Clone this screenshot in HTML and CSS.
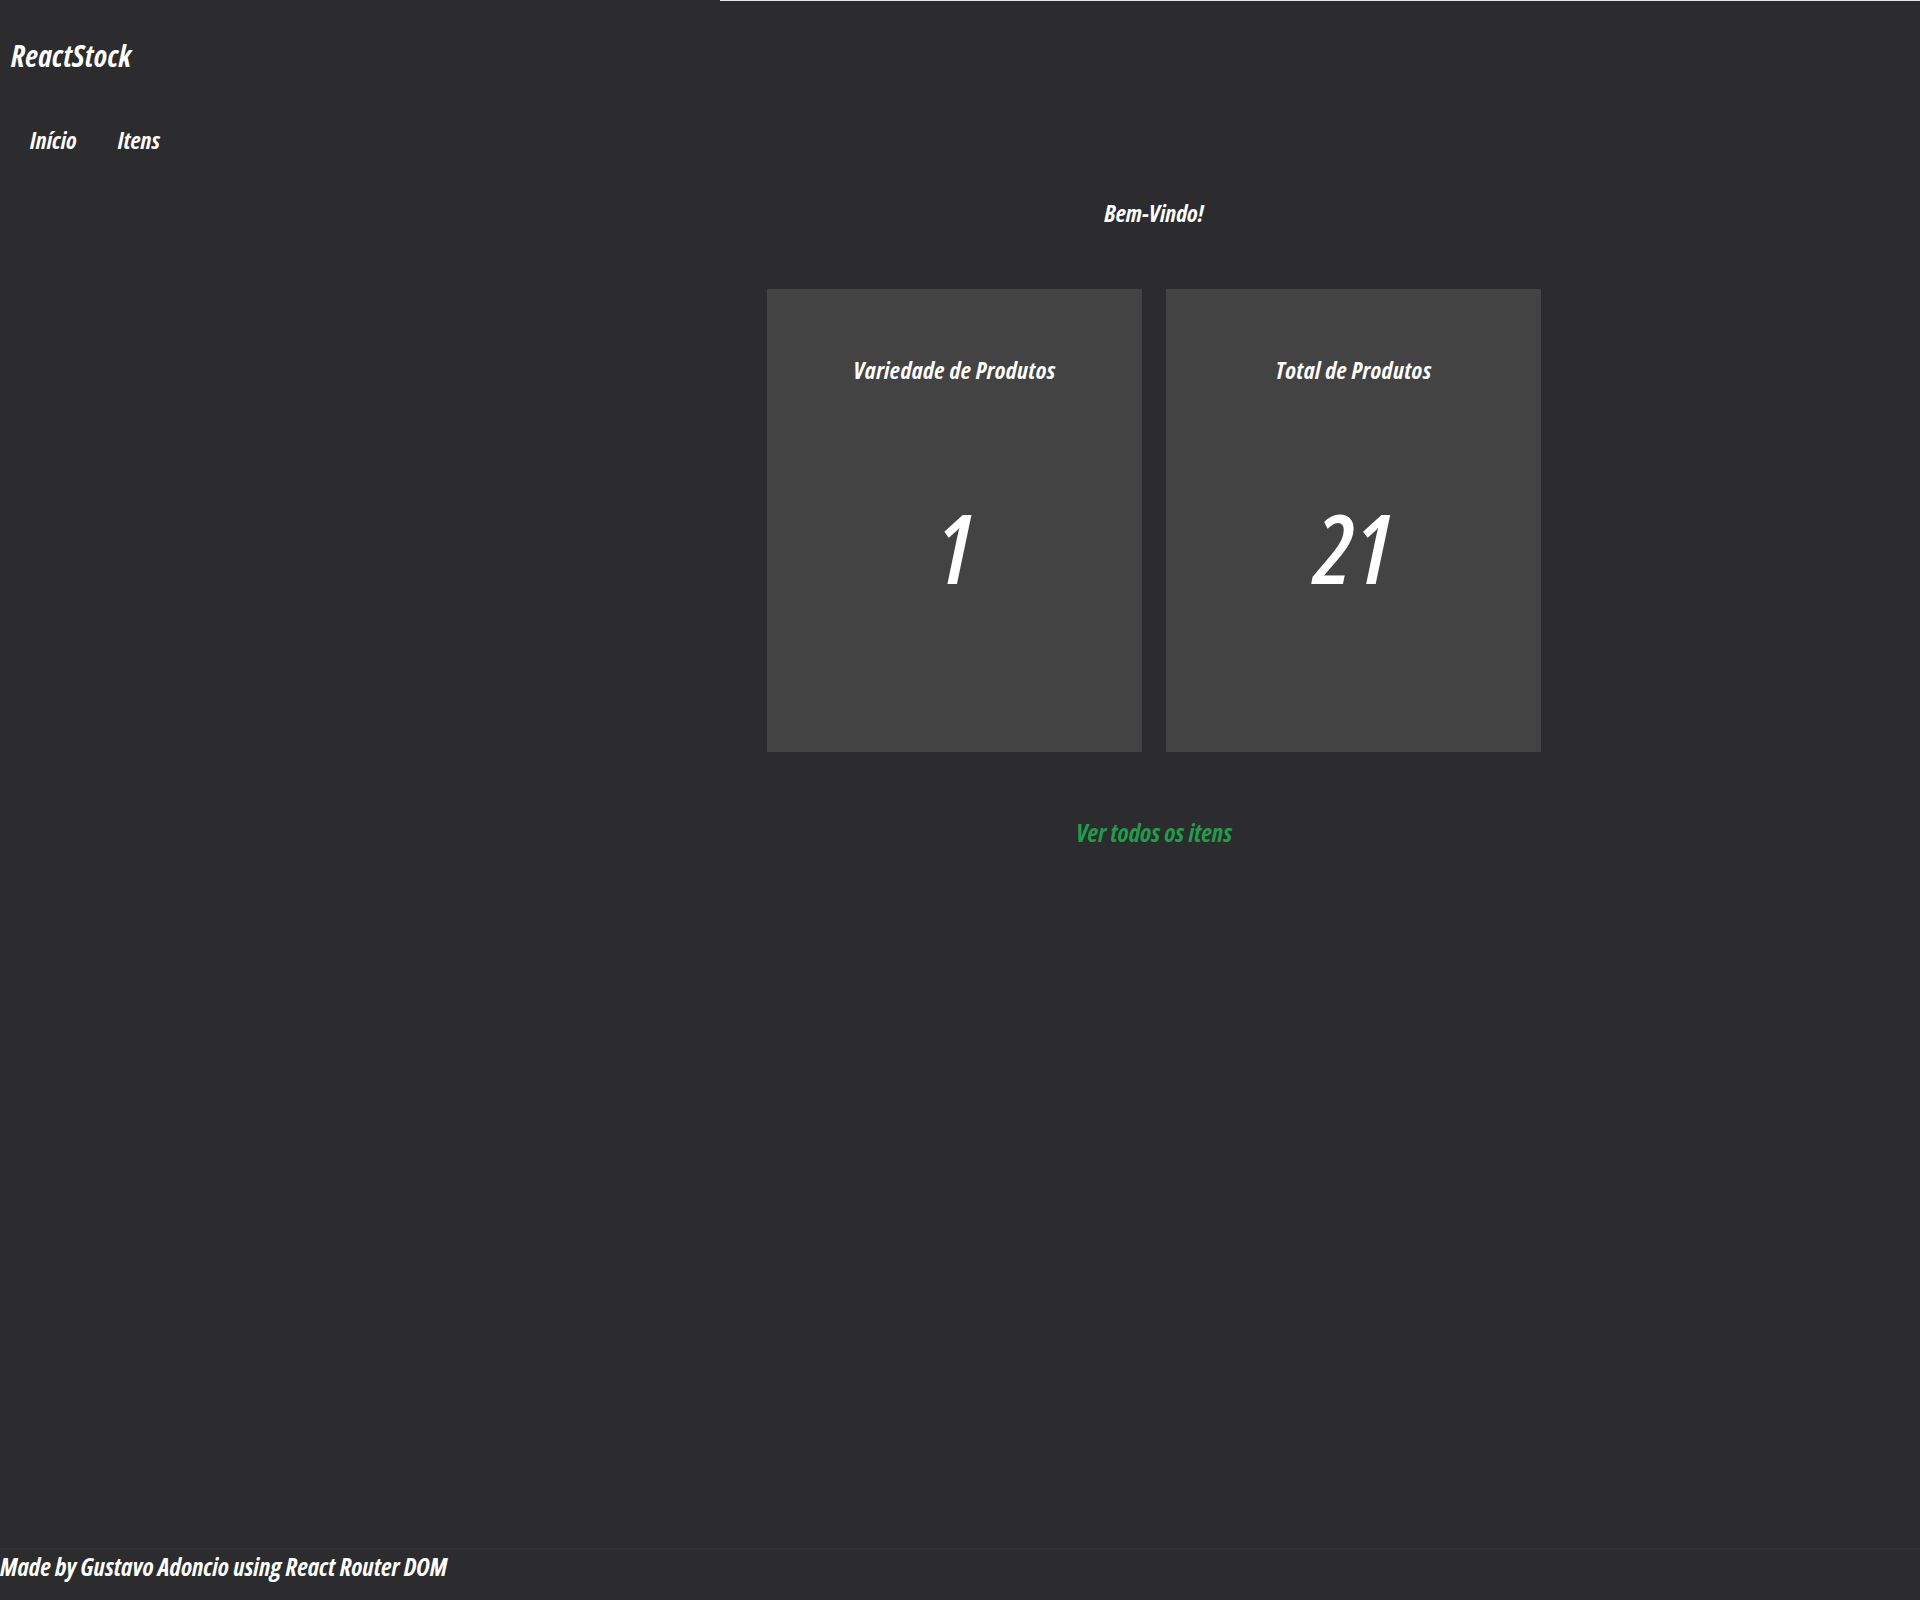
FILE: index.html
```html
<!DOCTYPE html>
<html lang="pt-BR">
<head>
<meta charset="utf-8">
<title>ReactStock</title>
<link rel="stylesheet" href="styles.css">
</head>
<body>
<div class="topline"></div>
<header class="header">
  <h1 class="logo">ReactStock</h1>
  <nav class="nav">
    <a href="#" class="nav-link">Início</a>
    <a href="#" class="nav-link">Itens</a>
  </nav>
</header>
<main class="main">
  <h2 class="welcome">Bem-Vindo!</h2>
  <div class="cards">
    <div class="card">
      <h3 class="card-title">Variedade de Produtos</h3>
      <p class="card-value">1</p>
    </div>
    <div class="card">
      <h3 class="card-title">Total de Produtos</h3>
      <p class="card-value">21</p>
    </div>
  </div>
  <a href="#" class="see-all">Ver todos os itens</a>
</main>
<footer class="footer">Made by Gustavo Adoncio using React Router DOM</footer>
</body>
</html>
```

FILE: styles.css
```css
* { box-sizing: border-box; }
html, body { margin: 0; padding: 0; }
body {
  min-height: 1600px;
  background: #2c2c2e;
  color: #ffffff;
  font-family: "Open Sans", "Liberation Sans", sans-serif;
  font-style: italic;
  font-weight: 700;
  font-stretch: 75%;
  display: flex;
  flex-direction: column;
}
.topline {
  height: 1px;
  margin-left: 720px;
  background: #e6e6e6;
}
.header {
  padding: 35px 0 0 11px;
}
.logo {
  margin: 0;
  font-size: 30px;
  line-height: 40px;
  font-weight: 700;
  letter-spacing: 0.3px;
}
.nav {
  display: flex;
  gap: 41px;
  margin-top: 48px;
  padding-left: 19px;
}
.nav-link {
  color: #ffffff;
  text-decoration: none;
  font-size: 24px;
  line-height: 32px;
}
.main {
  padding-left: 388px;
  display: flex;
  flex-direction: column;
  align-items: center;
}
.welcome {
  margin: 41px 0 0;
  font-size: 24px;
  line-height: 32px;
  font-weight: 700;
}
.cards {
  display: flex;
  gap: 24px;
  margin-top: 60px;
}
.card {
  width: 375px;
  height: 463px;
  background: #434343;
  padding-top: 65px;
  display: flex;
  flex-direction: column;
  align-items: center;
}
.card-title {
  margin: 0;
  font-size: 24px;
  line-height: 32px;
  font-weight: 700;
  letter-spacing: 0.4px;
}
.card-value {
  margin: 95px 0 0;
  font-size: 96px;
  line-height: 131px;
  font-weight: 600;
}
.see-all {
  margin-top: 63px;
  color: #1f9d4b;
  text-decoration: none;
  font-size: 25px;
  line-height: 34px;
}
.footer {
  margin-top: auto;
  border-top: 1px solid #35353a;
  font-size: 25px;
  line-height: 26px;
  padding: 4px 0 21px 0;
}
```
